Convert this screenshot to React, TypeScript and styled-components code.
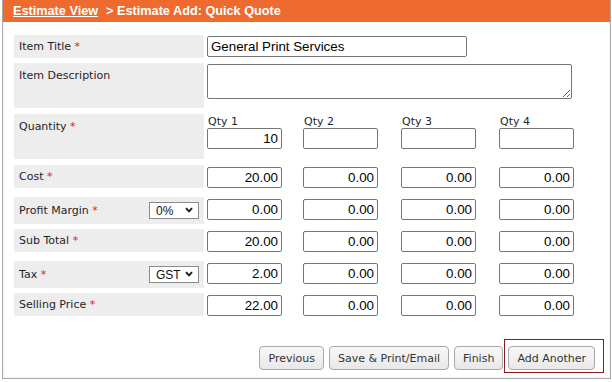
import React from "react"
import styled, { createGlobalStyle } from "styled-components"

type MoneyRow = {
  label: string
  values: string[]
  select?: string
}

const moneyRows: MoneyRow[] = [
  { label: "Cost", values: ["20.00", "0.00", "0.00", "0.00"] },
  { label: "Profit Margin", values: ["0.00", "0.00", "0.00", "0.00"], select: "0%" },
  { label: "Sub Total", values: ["20.00", "0.00", "0.00", "0.00"] },
  { label: "Tax", values: ["2.00", "0.00", "0.00", "0.00"], select: "GST" },
  { label: "Selling Price", values: ["22.00", "0.00", "0.00", "0.00"] },
]

const qtys = ["10", "", "", ""]

const App: React.FC = () => {
  return (
    <>
      <GlobalStyle />
      <StyledPanel>
        <StyledHeader>
          <StyledCrumb href="#">Estimate View</StyledCrumb>
          <StyledTitle>&gt; Estimate Add: Quick Quote</StyledTitle>
        </StyledHeader>
        <StyledBody>
          <StyledRow $h={28}>
            <StyledLabel>
              Item Title <StyledReq>*</StyledReq>
            </StyledLabel>
            <StyledWide $top={1}>
              <StyledTitleInput defaultValue="General Print Services" />
            </StyledWide>
          </StyledRow>

          <StyledRow $h={51}>
            <StyledLabel $h={45} $top>
              Item Description
            </StyledLabel>
            <StyledWide $top={1}>
              <StyledDesc />
            </StyledWide>
          </StyledRow>

          <StyledRow $h={51}>
            <StyledLabel $h={45} $top>
              Quantity <StyledReq>*</StyledReq>
            </StyledLabel>
            {qtys.map((q, i) => (
              <StyledCell key={i} $top={2}>
                <StyledQtyHead>Qty {i + 1}</StyledQtyHead>
                <StyledValue defaultValue={q} />
              </StyledCell>
            ))}
          </StyledRow>

          {moneyRows.map((row) => (
            <StyledRow key={row.label} $h={32}>
              <StyledLabel>
                {row.label} <StyledReq>*</StyledReq>
                {row.select && (
                  <StyledSelectWrap>
                    <StyledSelect defaultValue={row.select}>
                      <option>{row.select}</option>
                    </StyledSelect>
                    <StyledChevron width="8" height="6" viewBox="0 0 8 6">
                      <path d="M1 1.2 L4 4.3 L7 1.2" fill="none" stroke="#1a1a1a" strokeWidth="1.9" />
                    </StyledChevron>
                  </StyledSelectWrap>
                )}
              </StyledLabel>
              {row.values.map((v, i) => (
                <StyledCell key={i} $top={2}>
                  <StyledValue defaultValue={v} />
                </StyledCell>
              ))}
            </StyledRow>
          ))}

          <StyledButtonBar>
            <StyledButton>Previous</StyledButton>
            <StyledButton>Save &amp; Print/Email</StyledButton>
            <StyledButton>Finish</StyledButton>
            <StyledHighlight>
              <StyledButton>Add Another</StyledButton>
            </StyledHighlight>
          </StyledButtonBar>
        </StyledBody>
      </StyledPanel>
    </>
  )
}

export default App

const GlobalStyle = createGlobalStyle`
  html, body {
    margin: 0;
    padding: 0;
    background: #fff;
  }
  body {
    font-family: "DejaVu Sans", Verdana, sans-serif;
  }
`

const StyledPanel = styled.div`
  box-sizing: border-box;
  width: 609px;
  height: 379px;
  margin-left: 2px;
  border: 1px solid #a8a8a8;
  border-top: none;
  background: #fff;
  box-shadow: inset 0 0 3px rgba(0, 0, 0, 0.1);
`

const StyledHeader = styled.div`
  height: 22px;
  background: #ee6a2e;
  display: flex;
  align-items: center;
  padding-left: 10px;
  font-family: "Liberation Sans", Arial, sans-serif;
  font-size: 12.7px;
  font-weight: bold;
  color: #fff;
`

const StyledCrumb = styled.a`
  color: #fff;
  text-decoration: underline;
  margin-right: 8px;
`

const StyledTitle = styled.span`
  color: #fff;
`

const StyledBody = styled.div`
  padding: 13px 6px 0 11px;
`

const StyledRow = styled.div<{ $h: number }>`
  display: grid;
  grid-template-columns: 190px 96px 98px 98px 1fr;
  align-items: start;
  height: ${(p) => p.$h}px;
`

const StyledLabel = styled.div<{ $h?: number; $top?: boolean }>`
  box-sizing: border-box;
  height: ${(p) => (p.$h ? `${p.$h}px` : "auto")};
  background: #ededed;
  padding: ${(p) => (p.$top ? "6px 5px 5px" : "5px")};
  display: flex;
  align-items: ${(p) => (p.$top ? "flex-start" : "center")};
  white-space: pre;
  font-size: 11px;
  line-height: 13px;
  color: #1e1e2a;
`

const StyledReq = styled.span`
  color: #e3172a;
`

const StyledCell = styled.div<{ $top: number }>`
  padding: ${(p) => p.$top}px 0 0 3px;
  display: flex;
  flex-direction: column;
`

const StyledWide = styled(StyledCell)`
  grid-column: 2 / -1;
`

const StyledQtyHead = styled.div`
  font-size: 11px;
  line-height: 12px;
  color: #1e1e2a;
  padding-left: 1px;
`

const StyledValue = styled.input`
  box-sizing: border-box;
  width: 75px;
  height: 21px;
  border: 1px solid #767676;
  border-radius: 2px;
  padding: 0 3px;
  text-align: right;
  font-family: "Liberation Sans", Arial, sans-serif;
  font-size: 13.333px;
  color: #000;
  background: #fff;
`

const StyledTitleInput = styled(StyledValue)`
  width: 260px;
  text-align: left;
`

const StyledDesc = styled.textarea`
  box-sizing: border-box;
  width: 365px;
  height: 35px;
  border: 1px solid #767676;
  border-radius: 2px;
  padding: 2px 3px;
  resize: both;
  font-family: "Liberation Sans", Arial, sans-serif;
  font-size: 13.333px;
`

const StyledSelectWrap = styled.span`
  position: relative;
  margin-left: auto;
  display: flex;
`

const StyledSelect = styled.select`
  appearance: none;
  box-sizing: border-box;
  width: 50px;
  height: 17px;
  border: 1px solid #8a8a8a;
  border-radius: 0;
  padding: 0 0 0 6px;
  background: #fff;
  font-family: "Liberation Sans", Arial, sans-serif;
  font-size: 12px;
  color: #111;
`

const StyledChevron = styled.svg`
  position: absolute;
  right: 6px;
  top: 5px;
  pointer-events: none;
`

const StyledButtonBar = styled.div`
  display: flex;
  justify-content: flex-end;
  align-items: flex-start;
  gap: 5px;
  margin-top: 21px;
`

const StyledButton = styled.button`
  box-sizing: border-box;
  height: 24px;
  padding: 0 8px;
  border: 1px solid #a9a9a9;
  border-radius: 4px;
  background: linear-gradient(#f8f8f8, #e8e8e8);
  font-family: "DejaVu Sans", Verdana, sans-serif;
  font-size: 11px;
  color: #333;
  cursor: pointer;
`

const StyledHighlight = styled.span`
  display: flex;
  margin: -7px 0 0 -4px;
  padding: 6px 8px 2px 3px;
  border: 1px solid #8b1a1a;
`
